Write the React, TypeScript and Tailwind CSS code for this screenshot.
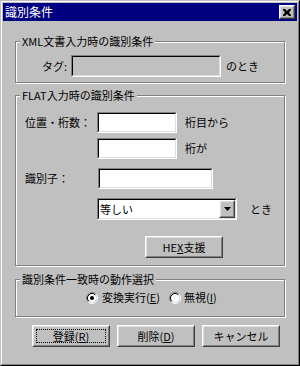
import React from "react";

const sunken =
  "border border-t-[#808080] border-l-[#808080] border-b-white border-r-white";
const sunkenInner =
  "h-full w-full border border-t-black border-l-black border-b-[#dfdfdf] border-r-[#dfdfdf]";

function Input({ w, h, disabled }: { w: string; h: string; disabled?: boolean }) {
  return (
    <div className={`${w} ${h} ${sunken} shrink-0`}>
      <div className={`${sunkenInner} ${disabled ? "bg-[#c0c0c0]" : "bg-white"}`} />
    </div>
  );
}

function Raised({ className, children }: { className?: string; children?: React.ReactNode }) {
  return (
    <div
      className={`border border-t-white border-l-white border-b-[#404040] border-r-[#404040] bg-[#c0c0c0] ${className ?? ""}`}
    >
      <div className="h-full w-full border border-t-[#dfdfdf] border-l-[#dfdfdf] border-b-[#808080] border-r-[#808080] flex items-center justify-center">
        {children}
      </div>
    </div>
  );
}

function Group({ label, h, children }: { label: string; h: string; children?: React.ReactNode }) {
  return (
    <div
      className={`relative ${h} border border-[#808080] shadow-[inset_1px_1px_0_#ffffff,1px_1px_0_#ffffff]`}
    >
      <div className="absolute -top-[8px] left-[4px] bg-[#c0c0c0] px-[2px] leading-[14px] whitespace-nowrap">
        {label}
      </div>
      {children}
    </div>
  );
}

function Radio({ checked }: { checked?: boolean }) {
  return (
    <svg width="12" height="12" viewBox="0 0 12 12" className="shrink-0">
      <circle cx="6" cy="6" r="4.2" fill="#ffffff" />
      <path d="M 2.11 9.89 A 5.5 5.5 0 0 1 9.89 2.11" fill="none" stroke="#808080" strokeWidth="1" />
      <path d="M 9.89 2.11 A 5.5 5.5 0 0 1 2.11 9.89" fill="none" stroke="#ffffff" strokeWidth="1" />
      <path d="M 2.82 9.18 A 4.5 4.5 0 0 1 9.18 2.82" fill="none" stroke="#000000" strokeWidth="1" />
      <path d="M 9.18 2.82 A 4.5 4.5 0 0 1 2.82 9.18" fill="none" stroke="#dfdfdf" strokeWidth="1" />
      {checked && <circle cx="6" cy="6" r="2" fill="#000000" />}
    </svg>
  );
}

export default function App() {
  return (
    <div
      className="w-[300px] h-[366px] bg-[#c0c0c0] border border-t-[#c0c0c0] border-l-[#c0c0c0] border-b-black border-r-black text-[11px] text-black"
      style={{ fontFamily: '"Noto Sans CJK JP", "Noto Sans", sans-serif' }}
    >
      <div className="h-full border border-t-white border-l-white border-b-[#808080] border-r-[#808080] p-[1px]">
        {/* Title bar */}
        <div className="h-[18px] bg-[#000080] flex items-center justify-between pl-[2px] pr-[2px]">
          <span className="text-white text-[12px] leading-[16px]">識別条件</span>
          <Raised className="w-[16px] h-[14px]">
            <svg width="8" height="7" viewBox="0 0 8 7">
              <path d="M0 0h2l2 2 2-2h2v1L6 3.5 8 6v1H6L4 5 2 7H0V6l2-2.5L0 1z" fill="#000" />
            </svg>
          </Raised>
        </div>

        {/* Body */}
        <div className="px-[12px] pt-[20px] flex flex-col">
          <Group label="XML文書入力時の識別条件" h="h-[42px]">
            <div className="flex items-center pt-[13px]">
              <div className="w-[55px] text-right pr-[4px]">タグ:</div>
              <Input w="w-[150px]" h="h-[22px]" disabled />
              <div className="ml-[5px]">のとき</div>
            </div>
          </Group>

          <div className="mt-[12px]">
            <Group label="FLAT入力時の識別条件" h="h-[171px]">
              <div className="flex flex-col pt-[16px] pl-[9px]">
                <div className="flex items-center">
                  <div className="w-[72px]">位置・桁数：</div>
                  <Input w="w-[80px]" h="h-[21px]" />
                  <div className="ml-[8px]">桁目から</div>
                </div>
                <div className="flex items-center mt-[5px] pl-[72px]">
                  <Input w="w-[80px]" h="h-[21px]" />
                  <div className="ml-[8px]">桁が</div>
                </div>
                <div className="flex items-center mt-[9px]">
                  <div className="w-[73px]">識別子：</div>
                  <Input w="w-[115px]" h="h-[21px]" />
                </div>
                <div className="flex items-center mt-[9px] pl-[72px]">
                  <div className={`w-[140px] h-[22px] ${sunken} shrink-0`}>
                    <div className={`${sunkenInner} bg-white flex items-center`}>
                      <div className="flex-1 pl-[1px] leading-[14px]">等しい</div>
                      <Raised className="w-[16px] h-[18px]">
                        <svg width="7" height="4" viewBox="0 0 7 4">
                          <path d="M0 0h7L3.5 4z" fill="#000" />
                        </svg>
                      </Raised>
                    </div>
                  </div>
                  <div className="ml-[13px]">とき</div>
                </div>
                <div className="mt-[16px] pl-[120px]">
                  <Raised className="w-[78px] h-[22px]">
                    <span className="leading-[14px]">
                      HE<u>X</u>支援
                    </span>
                  </Raised>
                </div>
              </div>
            </Group>
          </div>

          <div className="mt-[13px]">
            <Group label="識別条件一致時の動作選択" h="h-[38px]">
              <div className="flex items-center pt-[11px] pl-[70px]">
                <Radio checked />
                <div className="ml-[4px] leading-[13px]">
                  変換実行(<u>E</u>)
                </div>
                <div className="ml-[9px]">
                  <Radio />
                </div>
                <div className="ml-[3px] leading-[13px]">
                  無視(<u>I</u>)
                </div>
              </div>
            </Group>
          </div>

          <div className="mt-[8px] flex pl-[17px] gap-[7px]">
            <Raised className="w-[78px] h-[22px]">
              <div className="w-full h-full p-[2px]">
                <div className="w-full h-full border border-dotted border-black flex items-center justify-center leading-[13px]">
                  登録(<u>R</u>)
                </div>
              </div>
            </Raised>
            <Raised className="w-[78px] h-[22px]">
              <span className="leading-[13px]">
                削除(<u>D</u>)
              </span>
            </Raised>
            <Raised className="w-[78px] h-[22px]">
              <span className="leading-[13px]">キャンセル</span>
            </Raised>
          </div>
        </div>
      </div>
    </div>
  );
}
